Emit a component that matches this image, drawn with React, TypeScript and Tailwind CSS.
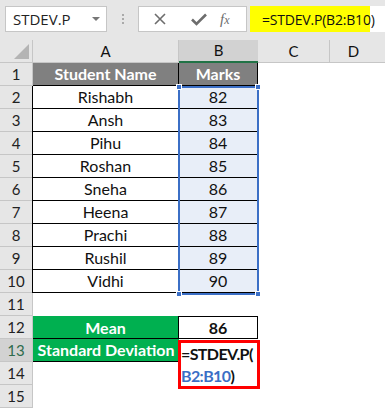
import React from 'react'

const students = [
  { name: 'Rishabh', mark: 82 },
  { name: 'Ansh', mark: 83 },
  { name: 'Pihu', mark: 84 },
  { name: 'Roshan', mark: 85 },
  { name: 'Sneha', mark: 86 },
  { name: 'Heena', mark: 87 },
  { name: 'Prachi', mark: 88 },
  { name: 'Rushil', mark: 89 },
  { name: 'Vidhi', mark: 90 },
]

function RowHead({ n, active = false }: { n: number; active?: boolean }) {
  return (
    <div
      className={`flex items-center justify-center border-b border-r border-[#c6c6c6] text-[15px] ${
        active ? 'bg-[#d2d2d2] text-[#2e6b4c]' : 'bg-[#e6e6e6] text-[#222]'
      }`}
    >
      {n}
    </div>
  )
}

function Handle({ className }: { className: string }) {
  return <div className={`absolute w-[6px] h-[6px] bg-[#3b6fc6] border border-white ${className}`} />
}

export default function App() {
  return (
    <div className="relative w-[385px] h-[410px] overflow-hidden bg-white font-['Lato','Open_Sans',sans-serif]">
      {/* formula bar */}
      <div className="h-[40px] bg-[#e6e6e6] flex items-start pt-[6px]">
        <div className="ml-[5px] w-[102px] h-[26px] bg-white border border-[#c6c6c6] flex items-center pl-[7px] pr-[6px] text-[15px] text-[#222] font-['Open_Sans',sans-serif]">
          <span className="flex-1">STDEV.P</span>
          <span className="w-0 h-0 border-l-[4px] border-r-[4px] border-t-[4px] border-l-transparent border-r-transparent border-t-[#777]" />
        </div>
        <div className="w-[31px] h-[26px] flex flex-col items-center justify-center gap-[2px]">
          <span className="w-[2px] h-[2px] bg-[#aaa]" />
          <span className="w-[2px] h-[2px] bg-[#aaa]" />
          <span className="w-[2px] h-[2px] bg-[#aaa]" />
        </div>
        <div className="w-[109px] h-[26px] bg-white border border-[#c6c6c6] flex items-center">
          <svg width="38" height="24" viewBox="0 0 38 24" className="ml-[3px]">
            <path d="M13 7 L23 17 M23 7 L13 17" stroke="#6d6d6d" strokeWidth="1.6" />
          </svg>
          <svg width="38" height="24" viewBox="0 0 38 24">
            <path d="M12 12.5 L16.5 17 L26 7.5" stroke="#6d6d6d" strokeWidth="2.6" fill="none" />
          </svg>
          <span className="ml-[2px] text-[15px] italic text-[#6d6d6d] font-['Liberation_Serif',serif]">
            f<span className="text-[12px]">x</span>
          </span>
        </div>
        <div className="ml-[3px] flex-1 h-[26px] bg-white flex items-center">
          <span className="bg-[#ffff00] h-full w-[120px] flex items-center pl-[12px] text-[14px] text-[#111] font-['Open_Sans',sans-serif] tracking-[-0.2px] whitespace-nowrap">
            =STDEV.P(B2:B10)
          </span>
        </div>
      </div>

      {/* sheet */}
      <div className="grid grid-cols-[33px_146px_79px_72px_1fr] auto-rows-[23px] text-[16px] text-[#111]">
        {/* column headers */}
        <div className="relative bg-[#e6e6e6] border-b border-r border-[#c6c6c6]">
          <span className="absolute right-[3px] bottom-[3px] w-0 h-0 border-b-[15px] border-l-[15px] border-b-[#b4b4b4] border-l-transparent" />
        </div>
        <div className="bg-[#e6e6e6] border-b border-r border-[#c6c6c6] flex items-center justify-center text-[15px]">A</div>
        <div className="bg-[#d2d2d2] border-b-2 border-[#217346] flex items-center justify-center text-[15px]">B</div>
        <div className="bg-[#e6e6e6] border-b border-r border-[#c6c6c6] flex items-center justify-center text-[15px]">C</div>
        <div className="bg-[#e6e6e6] border-b border-[#c6c6c6] flex items-center justify-center text-[15px] pr-[8px]">D</div>

        {/* row 1 */}
        <RowHead n={1} />
        <div className="bg-[#808080] border-b border-r border-black flex items-center justify-center font-bold text-white">
          Student Name
        </div>
        <div className="bg-[#808080] border-b border-r border-black flex items-center justify-center font-bold text-white">
          Marks
        </div>
        <div />
        <div />

        {students.map((s, i) => (
          <React.Fragment key={s.name}>
            <RowHead n={i + 2} />
            <div className="border-b border-r border-l border-black flex items-center justify-center -ml-px">{s.name}</div>
            <div className="bg-[#e8eef8] border-b border-r border-black flex items-center justify-center">{s.mark}</div>
            <div />
            <div />
          </React.Fragment>
        ))}

        {/* row 11 */}
        <RowHead n={11} />
        <div />
        <div />
        <div />
        <div />

        {/* row 12 */}
        <RowHead n={12} />
        <div className="bg-[#00b050] border-r border-black flex items-center justify-center font-bold text-white">Mean</div>
        <div className="border-t border-b border-r border-black flex items-center justify-center font-bold">86</div>
        <div />
        <div />

        {/* row 13 */}
        <RowHead n={13} active />
        <div className="bg-[#00b050] border-t border-b border-black flex items-center justify-center font-bold text-white -mt-px">
          Standard Deviation
        </div>
        <div />
        <div />
        <div />

        {/* rows 14, 15 */}
        <RowHead n={14} />
        <div />
        <div />
        <div />
        <div />
        <RowHead n={15} />
        <div />
        <div />
        <div />
        <div />
      </div>

      {/* range highlight B2:B10 */}
      <div className="absolute left-[178px] top-[86px] w-[81px] h-[209px] border-2 border-[#3b6fc6]">
        <Handle className="-left-[4px] -top-[4px]" />
        <Handle className="-right-[4px] -top-[4px]" />
        <Handle className="-left-[4px] -bottom-[4px]" />
        <Handle className="-right-[4px] -bottom-[4px]" />
      </div>

      {/* edited cell B13 */}
      <div className="absolute left-[178px] top-[340px] w-[82px] h-[49px] bg-white border-[3px] border-[#ff0000] font-bold text-[16px] leading-[22px] tracking-[-0.6px]">
        <div className="text-[#111]">=STDEV.P(</div>
        <div>
          <span className="text-[#3b6fc6]">B2:B10</span>
          <span className="text-[#111]">)</span>
        </div>
      </div>
    </div>
  )
}
